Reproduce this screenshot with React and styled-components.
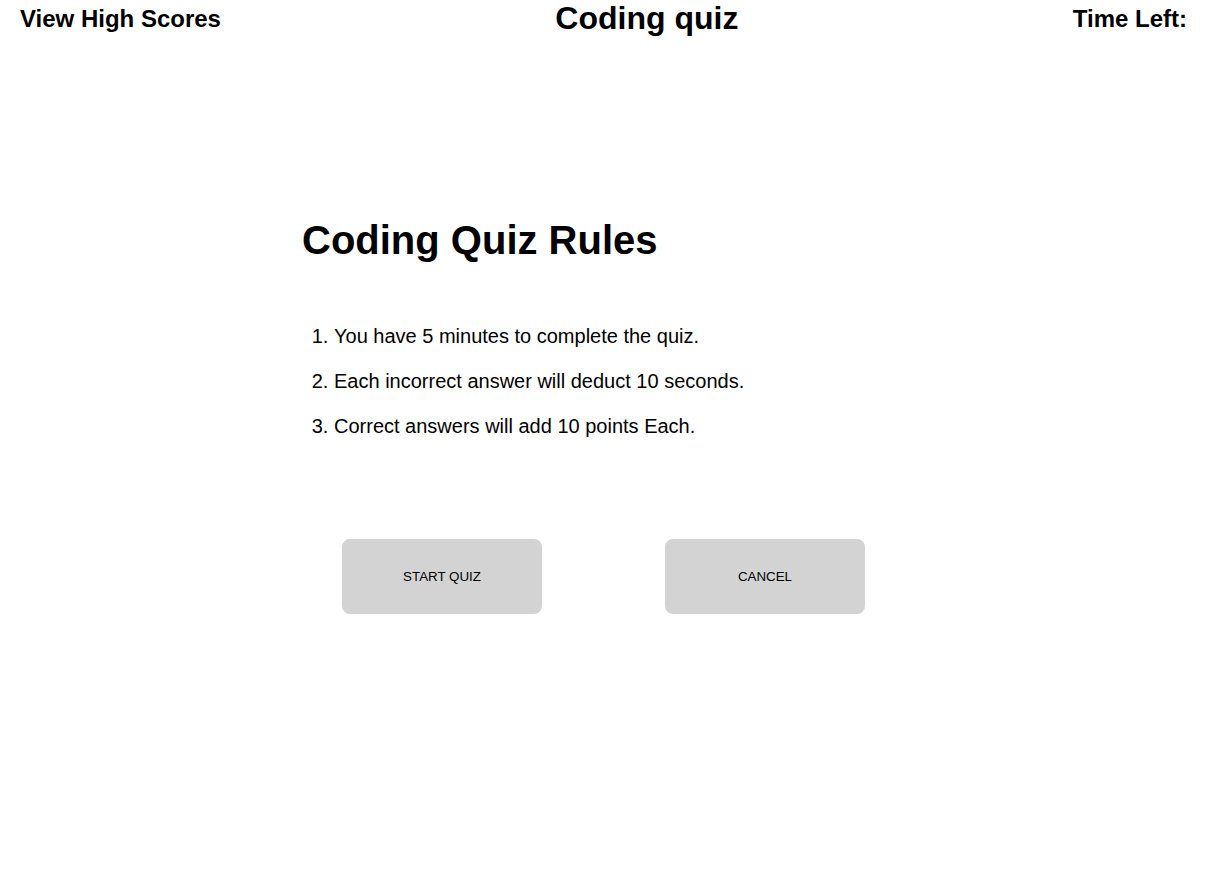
import React from "react";
import styled, { createGlobalStyle } from "styled-components";

const Global = createGlobalStyle`
  html, body { margin: 0; padding: 0; background: #fff; }
  body { font-family: "Liberation Sans", Arial, sans-serif; color: #000; }
`;

const Header = styled.header`
  display: flex;
  justify-content: space-between;
  align-items: center;
  padding: 0 20px;
`;

const NavText = styled.span`
  font-size: 24px;
  font-weight: bold;
  line-height: normal;
`;

const SiteTitle = styled.h1`
  margin: 0;
  font-size: 32px;
  font-weight: bold;
  line-height: normal;
`;

const Main = styled.main`
  width: 607px;
  margin: 180px auto 0;
  display: flex;
  flex-direction: column;
`;

const RulesTitle = styled.h2`
  margin: 0 0 0 2px;
  font-size: 40px;
  font-weight: bold;
  line-height: 46px;
`;

const RulesList = styled.ol`
  margin: 62px 0 0;
  padding-left: 34px;
  display: flex;
  flex-direction: column;
  gap: 22px;
`;

const Rule = styled.li`
  font-size: 20px;
  line-height: 23px;
`;

const Actions = styled.div`
  display: flex;
  justify-content: center;
  gap: 123px;
  margin-top: 101px;
`;

const Button = styled.button`
  width: 200px;
  height: 75px;
  border: none;
  border-radius: 8px;
  background: #d3d3d3;
  color: #000;
  font-family: "Liberation Sans", Arial, sans-serif;
  font-size: 13.333px;
  cursor: pointer;
`;

export default function App() {
  const rules = [
    "You have 5 minutes to complete the quiz.",
    "Each incorrect answer will deduct 10 seconds.",
    "Correct answers will add 10 points Each.",
  ];
  return (
    <>
      <Global />
      <Header>
        <NavText>View High Scores</NavText>
        <SiteTitle>Coding quiz</SiteTitle>
        <NavText>Time Left:</NavText>
      </Header>
      <Main>
        <RulesTitle>Coding Quiz Rules</RulesTitle>
        <RulesList>
          {rules.map((r) => (
            <Rule key={r}>{r}</Rule>
          ))}
        </RulesList>
        <Actions>
          <Button>START QUIZ</Button>
          <Button>CANCEL</Button>
        </Actions>
      </Main>
    </>
  );
}
